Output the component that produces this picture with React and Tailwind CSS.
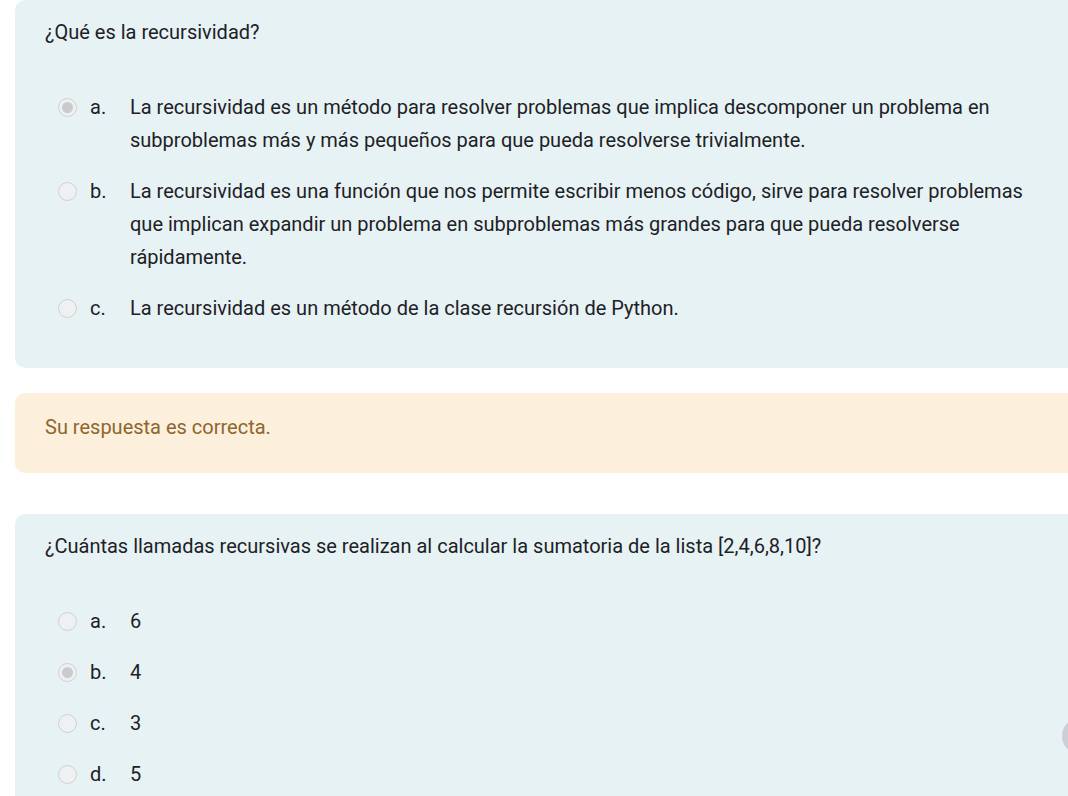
import React from 'react';

const questions = [
  {
    text: '¿Qué es la recursividad?',
    selected: 0,
    options: [
      'La recursividad es un método para resolver problemas que implica descomponer un problema en subproblemas más y más pequeños para que pueda resolverse trivialmente.',
      'La recursividad es una función que nos permite escribir menos código, sirve para resolver problemas que implican expandir un problema en subproblemas más grandes para que pueda resolverse rápidamente.',
      'La recursividad es un método de la clase recursión de Python.',
    ],
  },
  {
    text: '¿Cuántas llamadas recursivas se realizan al calcular la sumatoria de la lista [2,4,6,8,10]?',
    selected: 1,
    options: ['6', '4', '3', '5'],
  },
];

const letters = ['a.', 'b.', 'c.', 'd.'];

function Radio({ checked }) {
  return (
    <span className="mt-[7px] flex h-[19px] w-[19px] shrink-0 items-center justify-center rounded-full border border-[#cfd2d4] bg-[#eef0f1]">
      {checked && <span className="h-[11px] w-[11px] rounded-full bg-[#c9cbcd]" />}
    </span>
  );
}

function Question({ q }) {
  return (
    <div className="rounded-l-[10px] bg-[#e7f2f5] pl-[30px] pr-[40px] pt-[16px] pb-[43px]">
      <p>{q.text}</p>
      <div className="mt-[42px] flex flex-col gap-[18px] pl-[13px]">
        {q.options.map((opt, i) => (
          <label key={i} className="flex items-start">
            <Radio checked={q.selected === i} />
            <span className="ml-[13px] w-[40px] shrink-0">{letters[i]}</span>
            <span className="max-w-[900px]">{opt}</span>
          </label>
        ))}
      </div>
    </div>
  );
}

export default function App() {
  return (
    <div
      className="relative h-screen overflow-hidden bg-white pl-[15px] text-[20px] leading-[33px] text-[#1d2125]"
      style={{ fontFamily: 'Roboto, "Liberation Sans", sans-serif' }}
    >
      <Question q={questions[0]} />

      {/* Feedback */}
      <div className="mt-[25px] rounded-l-[10px] bg-[#fcefdc] px-[30px] pt-[18px] pb-[29px] text-[#8e662e]">
        Su respuesta es correcta.
      </div>

      <div className="mt-[41px]">
        <Question q={questions[1]} />
      </div>

      {/* floating button edge */}
      <div className="absolute right-[-30px] top-[718px] h-[36px] w-[36px] rounded-full bg-[#ccd0d6]" />
    </div>
  );
}
